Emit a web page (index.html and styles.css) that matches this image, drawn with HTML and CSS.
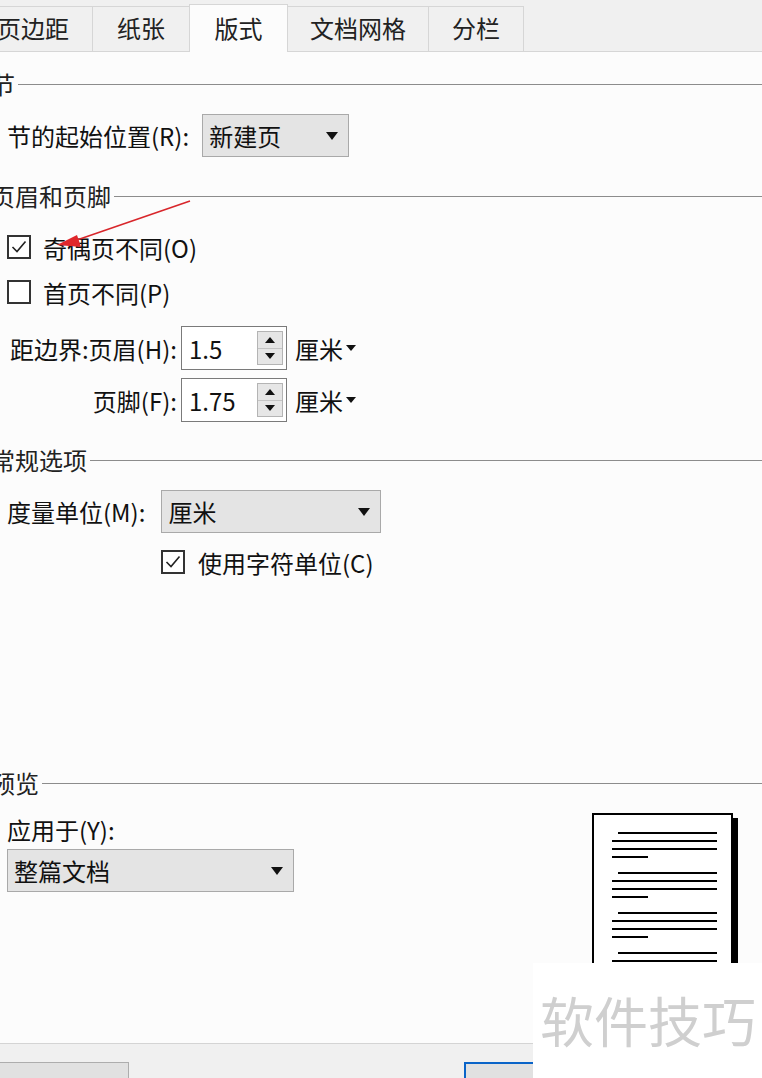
FILE: index.html
```html
<!DOCTYPE html>
<html lang="zh">
<head>
<meta charset="utf-8">
<title>页面设置 - 版式</title>
<link rel="stylesheet" href="styles.css">
</head>
<body>
<div class="tabs">
  <div class="tab t1">页边距</div>
  <div class="tab t2">纸张</div>
  <div class="tab t3 active">版式</div>
  <div class="tab t4">文档网格</div>
  <div class="tab t5">分栏</div>
</div>

<div class="main">
  <div class="sec-head h1"><span>节</span></div>
  <div class="row r-start">
    <span class="label">节的起始位置(R):</span>
    <div class="select sel-start"><span>新建页</span><i class="tri"></i></div>
  </div>

  <div class="sec-head h2"><span>页眉和页脚</span></div>
  <div class="check-row c1">
    <span class="cb"><svg viewBox="0 0 20 20" width="20" height="20"><polyline points="3.5,10 8,14.5 16.5,4.5" fill="none" stroke="#222" stroke-width="1.6"/></svg></span>
    <span>奇偶页不同(O)</span>
  </div>
  <div class="check-row c2">
    <span class="cb"></span>
    <span>首页不同(P)</span>
  </div>
  <div class="spin-row s1">
    <span class="label-r">距边界:页眉(H):</span>
    <div class="spin"><span>1.5</span>
      <div class="spinbtn"><span class="up"><i class="tri-s up-t"></i></span><span class="down"><i class="tri-s"></i></span></div>
    </div>
    <span class="unit">厘米<i class="tri-s"></i></span>
  </div>
  <div class="spin-row s2">
    <span class="label-r">页脚(F):</span>
    <div class="spin"><span>1.75</span>
      <div class="spinbtn"><span class="up"><i class="tri-s up-t"></i></span><span class="down"><i class="tri-s"></i></span></div>
    </div>
    <span class="unit">厘米<i class="tri-s"></i></span>
  </div>

  <div class="sec-head h3"><span>常规选项</span></div>
  <div class="row r-unit">
    <span class="label">度量单位(M):</span>
    <div class="select sel-unit"><span>厘米</span><i class="tri"></i></div>
  </div>
  <div class="check-row c3">
    <span class="cb"><svg viewBox="0 0 20 20" width="20" height="20"><polyline points="3.5,10 8,14.5 16.5,4.5" fill="none" stroke="#222" stroke-width="1.6"/></svg></span>
    <span>使用字符单位(C)</span>
  </div>

  <div class="sec-head h4"><span>预览</span></div>
  <div class="preview">
    <div class="apply">
      <div class="apply-label">应用于(Y):</div>
      <div class="select sel-apply"><span>整篇文档</span><i class="tri"></i></div>
    </div>
    <div class="page">
      <div class="para"><i class="ln first"></i><i class="ln"></i><i class="ln"></i><i class="ln short"></i></div>
      <div class="para"><i class="ln first"></i><i class="ln"></i><i class="ln"></i><i class="ln short"></i></div>
      <div class="para"><i class="ln first"></i><i class="ln"></i><i class="ln"></i><i class="ln short"></i></div>
      <div class="para"><i class="ln first"></i><i class="ln"></i><i class="ln"></i><i class="ln short"></i></div>
    </div>
  </div>
</div>

<div class="footer">
  <div class="btn btn-left"></div>
  <div class="btn btn-default"></div>
</div>

<svg class="arrow" width="200" height="70" viewBox="0 190 200 70">
  <line x1="190" y1="201" x2="74" y2="241" stroke="#d8262b" stroke-width="1.6"/>
  <polygon points="57,245 77,235 81,247" fill="#e0262b"/>
</svg>

<div class="watermark">软件技巧</div>
</body>
</html>
```
FILE: styles.css
```css
html, body {
  margin: 0;
  padding: 0;
}
body {
  width: 762px;
  height: 1078px;
  overflow: hidden;
  position: relative;
  background: #fcfcfc;
  font-family: "Noto Sans CJK SC", "Microsoft YaHei", sans-serif;
  font-size: 24px;
  color: #111;
}

/* Tabs */
.tabs {
  display: flex;
  align-items: flex-end;
  height: 51px;
  margin-left: -27px;
  border-bottom: 1px solid #d6d6d6;
  background: #f0f0f0;
}
.tab {
  box-sizing: border-box;
  height: 45px;
  line-height: 42px;
  text-align: center;
  border: 1px solid #d6d6d6;
  border-bottom: none;
  margin-right: -1px;
  background: #f0f0f0;
  color: #222;
}
.t1 { width: 120px; }
.t2 { width: 98px; }
.t3 { width: 99px; }
.t4 { width: 142px; }
.t5 { width: 96px; }
.tab.active {
  height: 48px;
  line-height: 45px;
  margin-bottom: -1px;
  background: #fcfcfc;
  position: relative;
  z-index: 1;
}

/* Main */
.main {
  box-sizing: border-box;
  height: 991px;
  padding-left: 7px;
  overflow: hidden;
}
.sec-head {
  display: flex;
  align-items: center;
  height: 30px;
  line-height: 30px;
  margin-left: -16px;
  color: #222;
}
.sec-head::after {
  content: "";
  flex: 1;
  height: 1px;
  background: #8c8c8c;
  margin-left: 3px;
}
.h1 { margin-top: 17px; }
.h2 { margin-top: 24px; }
.h3 { margin-top: 23px; }
.h4 { margin-top: 194px; }

.row {
  display: flex;
  align-items: center;
  gap: 13px;
  height: 43px;
}
.r-start { margin-top: 15px; }
.r-unit { margin-top: 15px; }

.select {
  box-sizing: border-box;
  height: 43px;
  display: flex;
  align-items: center;
  justify-content: space-between;
  padding: 0 10px 0 6px;
  border: 1px solid #a9a9a9;
  background: #e4e4e4;
}
.sel-start { width: 147px; }
.sel-unit { width: 220px; margin-left: 3px; }
.sel-apply { width: 287px; }
.tri {
  width: 0;
  height: 0;
  border-left: 6.5px solid transparent;
  border-right: 6.5px solid transparent;
  border-top: 8px solid #111;
}

/* Checkboxes */
.check-row {
  display: flex;
  align-items: center;
  gap: 12px;
  height: 24px;
}
.c1 { margin-top: 24px; }
.c2 { margin-top: 21px; }
.c3 { margin-top: 17px; margin-left: 154px; gap: 13px; }
.cb {
  box-sizing: border-box;
  width: 24px;
  height: 24px;
  border: 2px solid #333;
  background: #fff;
  display: flex;
  align-items: center;
  justify-content: center;
}
.cb svg { display: block; }

/* Spin rows */
.spin-row {
  display: flex;
  align-items: center;
  height: 44px;
}
.s1 { margin-top: 22px; }
.s2 { margin-top: 8px; }
.label-r {
  width: 170px;
  text-align: right;
  margin-right: 4px;
}
.spin {
  box-sizing: border-box;
  width: 106px;
  height: 44px;
  border: 1px solid #7a7a7a;
  background: #fff;
  display: flex;
  align-items: center;
  justify-content: space-between;
  padding: 0 3px 0 7px;
}
.spinbtn {
  box-sizing: border-box;
  width: 26px;
  height: 34px;
  border: 1px solid #b4b4b4;
  background: #e6e6e6;
  display: flex;
  flex-direction: column;
}
.spinbtn span {
  flex: 1;
  display: flex;
  align-items: center;
  justify-content: center;
}
.spinbtn .up { border-bottom: 1px solid #c4c4c4; }
.tri-s {
  width: 0;
  height: 0;
  border-left: 5px solid transparent;
  border-right: 5px solid transparent;
  border-top: 6px solid #111;
}
.tri-s.up-t {
  border-top: none;
  border-bottom: 6px solid #111;
}
.unit {
  display: flex;
  align-items: center;
  gap: 3px;
  margin-left: 8px;
}

/* Preview */
.preview {
  display: flex;
  align-items: flex-start;
}
.apply { width: 287px; }
.apply-label {
  margin-top: 17px;
  height: 30px;
  line-height: 30px;
  margin-bottom: 4px;
}
.page {
  box-sizing: border-box;
  width: 141px;
  height: 190px;
  margin-top: 15px;
  margin-left: auto;
  margin-right: 29px;
  border: 2px solid #000;
  background: #fff;
  box-shadow: 5px 5px 0 #000;
  padding: 17px 14px 0 18px;
  display: flex;
  flex-direction: column;
  gap: 14px;
}
.para {
  display: flex;
  flex-direction: column;
  gap: 6px;
}
.ln {
  display: block;
  height: 2px;
  background: #000;
}
.ln.first { margin-left: 6px; }
.ln.short { width: 36px; }

/* Footer */
.footer {
  position: relative;
  height: 40px;
  border-top: 1px solid #d4d4d4;
  background: #f0f0f0;
  display: flex;
  align-items: flex-start;
  padding-top: 18px;
  box-sizing: border-box;
}
.btn {
  box-sizing: border-box;
  height: 32px;
  background: #e1e1e1;
  border: 1px solid #adadad;
}
.btn-left {
  width: 150px;
  margin-left: -21px;
}
.btn-default {
  width: 120px;
  margin-left: 335px;
  border: 2px solid #0a64c8;
}

/* Overlays */
.arrow {
  position: absolute;
  left: 0;
  top: 190px;
}
.watermark {
  position: absolute;
  left: 533px;
  top: 963px;
  width: 229px;
  height: 115px;
  box-sizing: border-box;
  background: #fff;
  padding: 17px 0 0 7px;
  font-size: 54px;
  line-height: 80px;
  color: #cfcfcf;
  letter-spacing: 0;
}
```
